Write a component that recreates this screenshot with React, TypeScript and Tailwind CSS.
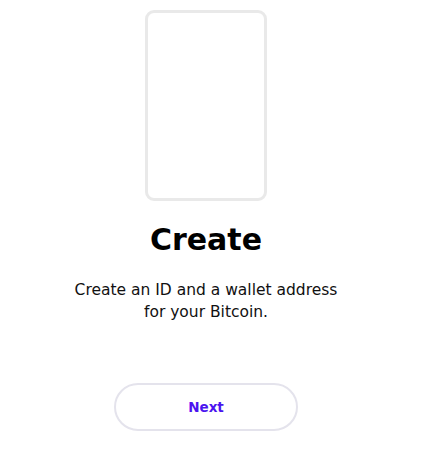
import React from "react";

export default function App() {
  return (
    <div
      className="w-[412px] min-h-[471px] bg-white flex flex-col items-center"
      style={{ fontFamily: '"DejaVu Sans", sans-serif' }}
    >
      <div className="mt-[10px] w-[122px] h-[191px] rounded-[9px] border-[3px] border-[#e9e9e9] bg-white" />
      <h1 className="mt-[20px] text-[30px] leading-[38px] font-bold text-black">Create</h1>
      <p className="mt-[20px] text-[15.5px] leading-[22px] text-[#111] text-center">
        Create an ID and a wallet address
        <br />
        for your Bitcoin.
      </p>
      <button className="mt-[60px] w-[184px] h-[48px] rounded-full border-2 border-[#e4e3ec] bg-white text-[#4b14ef] text-[13.5px] font-bold">
        Next
      </button>
    </div>
  );
}
